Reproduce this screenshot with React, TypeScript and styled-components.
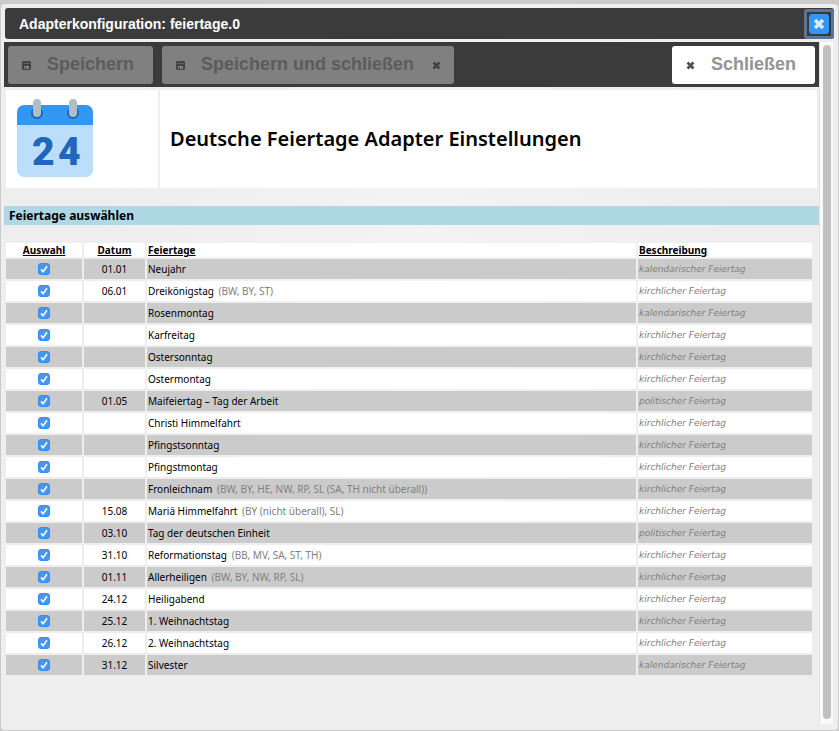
import React, { useState } from "react";
import styled, { createGlobalStyle } from "styled-components";

const GlobalStyle = createGlobalStyle`
  * { box-sizing: border-box; }
  html, body, #root { height: 100%; }
  body {
    margin: 0;
    background: #cbcbcb;
    color: #000;
    font-family: "Noto Sans", "Open Sans", sans-serif;
  }
`;

const Page = styled.div`
  min-height: 100%;
  display: flex;
  padding: 4px 1px 1px;
`;

const Dialog = styled.section`
  flex: 1;
  min-width: 0;
  display: flex;
  flex-direction: column;
  padding: 4px 4px 6px 3px;
  border-radius: 4px;
  background: radial-gradient(ellipse at 50% 30%, #f3f3f3, #eee 55%);
`;

const TitleBar = styled.header`
  display: flex;
  align-items: center;
  justify-content: space-between;
  height: 31px;
  margin-left: 1px;
  padding-left: 14px;
  border-radius: 3px;
  background: #3b3b3b;
  color: #fff;
`;

const Title = styled.h1`
  margin: 0;
  font: bold 14px/20px "Liberation Sans", Arial, sans-serif;
`;

const CloseButton = styled.button`
  display: flex;
  width: 30px;
  height: 30px;
  padding: 2px;
  border: 3px solid #5b7594;
  border-radius: 3px;
  background: #36393e;
`;

const CloseFace = styled.span`
  flex: 1;
  display: grid;
  place-items: center;
  border-radius: 3px;
  background: #3396f4;
  color: #dfe9f3;
`;

const Body = styled.div`
  flex: 1;
  display: flex;
  margin-top: 3px;
`;

const Content = styled.main`
  flex: 1;
  min-width: 0;
`;

const ScrollTrack = styled.div`
  display: flex;
  width: 14px;
  margin-right: 1px;
  padding: 3px 2px 5px 3px;
  border-left: 1px solid #e3e3e3;
  background: #fafafa;
`;

const ScrollThumb = styled.div`
  flex: 1;
  border-radius: 4px;
  background: #c1c1c1;
`;

const Toolbar = styled.div`
  display: flex;
  gap: 9px;
  height: 45px;
  padding: 4px 4px 3px;
  background: #3b3b3b;
`;

const ToolButton = styled.button<{ $light?: boolean }>`
  display: flex;
  align-items: center;
  padding: 0 19px 2px 14px;
  border: 0;
  border-radius: 3px;
  white-space: nowrap;
  font: bold 18px/22px "Liberation Sans", Arial, sans-serif;
  background: ${(p) => (p.$light ? "#fff" : "#808080")};
  color: ${(p) => (p.$light ? "#949494" : "#5c5c5c")};
  margin-left: ${(p) => (p.$light ? "auto" : "0")};

  svg { flex: none; margin-top: 3px; color: ${(p) => (p.$light ? "#505050" : "#424242")}; }
  span { margin: 0 0 0 16px; }
  span + svg { margin-left: 18px; margin-right: -6px; }
`;

const Intro = styled.div`
  display: grid;
  grid-template-columns: 152px 1fr;
  gap: 2px;
  margin: 3px 2px 18px;
`;

const IntroCell = styled.div`
  display: flex;
  align-items: center;
  height: 98px;
  padding: 0 10px;
  background: #fff;
`;

const Heading = styled.h2`
  margin: 0;
  font-size: 20px;
  line-height: 28px;
  font-weight: 600;
`;

const SectionTitle = styled.h3`
  margin: 0 0 16px;
  padding-left: 5px;
  font-size: 12px;
  line-height: 19px;
  background: #add8e4;
`;

const TableArea = styled.div`
  padding-right: 5px;
`;

const Table = styled.table`
  width: 100%;
  table-layout: fixed;
  border-collapse: separate;
  border-spacing: 2px;
  font-size: 10px;
  line-height: 14px;
`;

const Col = styled.col<{ $width?: number }>`
  width: ${(p) => (p.$width ? `${p.$width}px` : "auto")};
`;

const HeadCell = styled.th<{ $center?: boolean }>`
  padding: 0 1px;
  height: 14px;
  text-align: ${(p) => (p.$center ? "center" : "left")};
  text-decoration: underline;
  background: #fff;
`;

const Row = styled.tr`
  background: #fff;
  &:nth-child(odd) { background: #cbcbcb; }
`;

const Cell = styled.td<{ $center?: boolean }>`
  height: 20px;
  padding: 0 1px;
  text-align: ${(p) => (p.$center ? "center" : "left")};
`;

const States = styled.span`
  margin-left: 2px;
  color: #808080;
`;

const Note = styled.em`
  display: block;
  font-family: "DejaVu Sans", Verdana, sans-serif;
  font-size: 9px;
  color: #808080;
`;

const Check = styled.span`
  display: grid;
  width: 12px;
  height: 12px;
  margin: 0 auto;

  > * { grid-area: 1 / 1; }
  svg { pointer-events: none; visibility: hidden; }
  input:checked + svg { visibility: visible; }
`;

const CheckInput = styled.input`
  appearance: none;
  width: 12px;
  height: 12px;
  margin: 0;
  border-radius: 3px;
  border: 1px solid #aaa;
  background: #fff;
  &:checked { border-color: #3a8bf0; background: #4496f5; }
`;

const Cross = ({ size }: { size: number }) => (
  <svg width={size} height={size} viewBox="0 0 10 10" aria-hidden="true">
    <path d="M1.7 1.7 8.3 8.3M8.3 1.7 1.7 8.3" stroke="currentColor" strokeWidth="3" />
  </svg>
);

const Disk = () => (
  <svg width="9" height="9" viewBox="0 0 9 9" aria-hidden="true">
    <path
      fill="currentColor"
      fillRule="evenodd"
      d="M1 0h7l1 1v7l-1 1H1L0 8V1zM2 5v3h1V6h1v2h3V5z"
    />
    <path d="M1 2.5h7" stroke="#808080" strokeOpacity="0.5" />
  </svg>
);

const Calendar = () => (
  <svg width="78" height="82" viewBox="0 0 78 82" role="img" aria-label="Kalender">
    <path d="M1 27h76v45a7 7 0 0 1-7 7H8a7 7 0 0 1-7-7z" fill="#bbdefb" />
    <path d="M8 7h62a7 7 0 0 1 7 7v13H1V14a7 7 0 0 1 7-7z" fill="#3396f0" />
    <circle cx="21" cy="15" r="6" fill="#1f65b8" />
    <circle cx="57" cy="15" r="6" fill="#1f65b8" />
    <rect x="17" y="1" width="8" height="18" rx="4" fill="#aebfc7" />
    <rect x="53" y="1" width="8" height="18" rx="4" fill="#aebfc7" />
    <text x="16 42" y="67" fill="#2265bd" fontFamily="Roboto, sans-serif" fontWeight="900" fontSize="39">
      24
    </text>
  </svg>
);

type Holiday = { date?: string; name: string; states?: string; kind: string };

const church = "kirchlicher Feiertag";
const calendar = "kalendarischer Feiertag";
const political = "politischer Feiertag";

const holidays: Holiday[] = [
  { date: "01.01", name: "Neujahr", kind: calendar },
  { date: "06.01", name: "Dreikönigstag", states: "(BW, BY, ST)", kind: church },
  { name: "Rosenmontag", kind: calendar },
  { name: "Karfreitag", kind: church },
  { name: "Ostersonntag", kind: church },
  { name: "Ostermontag", kind: church },
  { date: "01.05", name: "Maifeiertag – Tag der Arbeit", kind: political },
  { name: "Christi Himmelfahrt", kind: church },
  { name: "Pfingstsonntag", kind: church },
  { name: "Pfingstmontag", kind: church },
  { name: "Fronleichnam", states: "(BW, BY, HE, NW, RP, SL (SA, TH nicht überall))", kind: church },
  { date: "15.08", name: "Mariä Himmelfahrt", states: "(BY (nicht überall), SL)", kind: church },
  { date: "03.10", name: "Tag der deutschen Einheit", kind: political },
  { date: "31.10", name: "Reformationstag", states: "(BB, MV, SA, ST, TH)", kind: church },
  { date: "01.11", name: "Allerheiligen", states: "(BW, BY, NW, RP, SL)", kind: church },
  { date: "24.12", name: "Heiligabend", kind: church },
  { date: "25.12", name: "1. Weihnachtstag", kind: church },
  { date: "26.12", name: "2. Weihnachtstag", kind: church },
  { date: "31.12", name: "Silvester", kind: calendar },
];

function HolidayRow({ holiday, id }: { holiday: Holiday; id: string }) {
  const [checked, setChecked] = useState(true);
  return (
    <Row>
      <Cell $center>
        <Check>
          <CheckInput id={id} type="checkbox" checked={checked} onChange={(e) => setChecked(e.target.checked)} />
          <svg width="12" height="12" viewBox="0 0 12 12" aria-hidden="true">
            <path d="M3 6.4 5.1 8.7 9 3.2" fill="none" stroke="#fff" strokeWidth="1.6" />
          </svg>
        </Check>
      </Cell>
      <Cell $center>{holiday.date}</Cell>
      <Cell>
        <label htmlFor={id}>{holiday.name}</label>
        {holiday.states && <States> {holiday.states}</States>}
      </Cell>
      <Cell>
        <Note>{holiday.kind}</Note>
      </Cell>
    </Row>
  );
}

export default function App() {
  return (
    <>
      <GlobalStyle />
      <Page>
        <Dialog aria-labelledby="dialog-title">
          <TitleBar>
            <Title id="dialog-title">Adapterkonfiguration: feiertage.0</Title>
            <CloseButton type="button" aria-label="Dialog schließen">
              <CloseFace>
                <Cross size={12} />
              </CloseFace>
            </CloseButton>
          </TitleBar>
          <Body>
            <Content>
              <Toolbar>
                <ToolButton type="button" disabled>
                  <Disk />
                  <span>Speichern</span>
                </ToolButton>
                <ToolButton type="button" disabled>
                  <Disk />
                  <span>Speichern und schließen</span>
                  <Cross size={9} />
                </ToolButton>
                <ToolButton type="button" $light>
                  <Cross size={9} />
                  <span>Schließen</span>
                </ToolButton>
              </Toolbar>
              <Intro>
                <IntroCell>
                  <Calendar />
                </IntroCell>
                <IntroCell>
                  <Heading>Deutsche Feiertage Adapter Einstellungen</Heading>
                </IntroCell>
              </Intro>
              <SectionTitle>Feiertage auswählen</SectionTitle>
              <TableArea>
                <Table>
                  <colgroup>
                    <Col $width={76} />
                    <Col $width={61} />
                    <Col />
                    <Col $width={174} />
                  </colgroup>
                  <thead>
                    <tr>
                      <HeadCell $center>Auswahl</HeadCell>
                      <HeadCell $center>Datum</HeadCell>
                      <HeadCell>Feiertage</HeadCell>
                      <HeadCell>Beschreibung</HeadCell>
                    </tr>
                  </thead>
                  <tbody>
                    {holidays.map((h, i) => (
                      <HolidayRow key={h.name} id={`holiday-${i}`} holiday={h} />
                    ))}
                  </tbody>
                </Table>
              </TableArea>
            </Content>
            <ScrollTrack>
              <ScrollThumb />
            </ScrollTrack>
          </Body>
        </Dialog>
      </Page>
    </>
  );
}
